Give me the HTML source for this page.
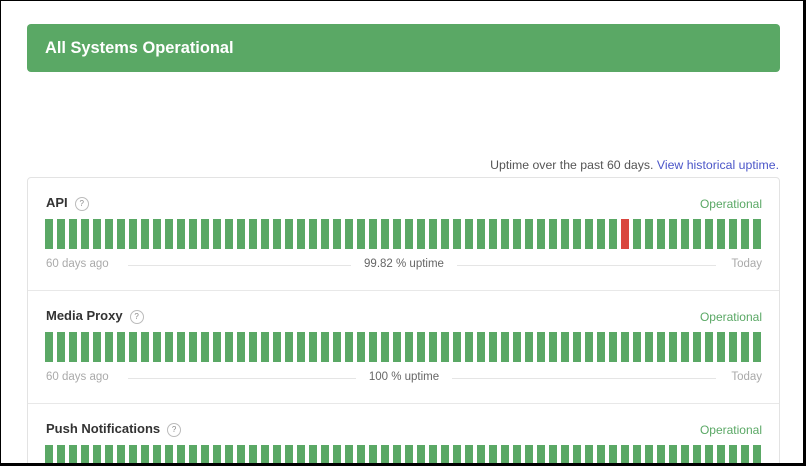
<!DOCTYPE html><html><head><style>
*{margin:0;padding:0;box-sizing:border-box}
html,body{width:806px;height:466px;overflow:hidden}
body{background:#000;font-family:"Liberation Sans",sans-serif;position:relative}
.page{position:absolute;left:1px;top:1px;width:802px;height:462px;background:#fff;overflow:hidden}
.banner{position:absolute;left:26px;top:23px;width:753px;height:48px;background:#5aa865;border-radius:4px;color:#fff;font-weight:bold;font-size:16.4px;line-height:48px;padding-left:18px}
.up{position:absolute;right:24px;top:157px;font-size:12.3px;color:#555}
.up a{color:#4a55c8;text-decoration:none}
.card{position:absolute;left:26px;top:176px;width:753px;height:290px;border:1px solid #e3e3e3;border-radius:4px}
.row{position:absolute;left:0;width:751px;height:113px;border-bottom:1px solid #e8e8e8}
.name{position:absolute;left:18px;top:17px;font-size:13px;font-weight:bold;color:#333}
.q{display:inline-block;width:14px;height:14px;border:1px solid #bbb;border-radius:50%;font-size:8px;color:#888;text-align:center;line-height:12px;margin-left:7px;vertical-align:1px;font-weight:normal}
.op{position:absolute;right:17px;top:19px;font-size:12px;color:#5aa865}
.bars{position:absolute;left:17px;top:41px;height:30px;width:720px}
.bars i{position:absolute;top:0;width:7.5px;height:30px;background:#5aa865}
.ft{position:absolute;left:18px;right:17px;top:80px;height:14px;font-size:11.5px;color:#aaa}
.ft .l{position:absolute;left:0}.ft .r{position:absolute;right:0}
.ft .c{position:absolute;left:0;right:0;text-align:center;color:#666}
.ft .c span{background:#fff;padding:0 13px;position:relative}
.ft .ln{position:absolute;left:82px;right:46px;top:7px;border-top:1px solid #e5e5e5}
</style></head><body><div class="page">
<div class="banner">All Systems Operational</div>
<div class="up">Uptime over the past 60 days. <a>View historical uptime.</a></div>
<div class="card">
<div class="row" style="top:0"><div class="name">API<span class="q">?</span></div><div class="op">Operational</div><div class="bars" id="b1"></div><div class="ft"><div class="ln"></div><span class="l">60 days ago</span><div class="c"><span>99.82 % uptime</span></div><span class="r">Today</span></div></div>
<div class="row" style="top:113px"><div class="name">Media Proxy<span class="q">?</span></div><div class="op">Operational</div><div class="bars" id="b2"></div><div class="ft"><div class="ln"></div><span class="l">60 days ago</span><div class="c"><span>100 % uptime</span></div><span class="r">Today</span></div></div>
<div class="row" style="top:226px"><div class="name">Push Notifications<span class="q">?</span></div><div class="op">Operational</div><div class="bars" id="b3"></div></div>
</div></div>
<script>
['b1','b2','b3'].forEach(function(id,k){var h='';for(var i=0;i<60;i++){h+='<i style="left:'+(i*12)+'px'+(k==0&&i==48?';background:#d9463e':'')+'"></i>';}document.getElementById(id).innerHTML=h;});
</script>
</body></html>
